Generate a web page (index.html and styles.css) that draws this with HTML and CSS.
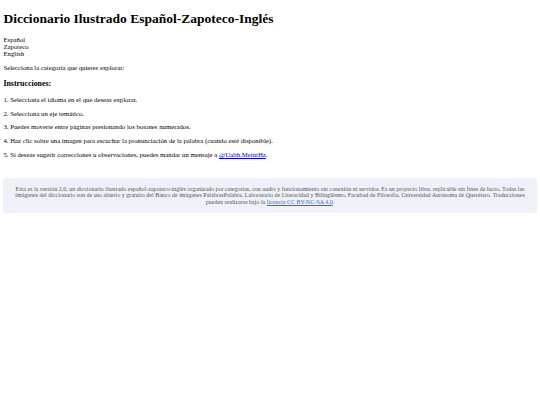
FILE: index.html
```html
<!DOCTYPE html>
<html lang="es">
<head>
<meta charset="utf-8">
<title>Diccionario Ilustrado Español-Zapoteco-Inglés</title>
<link rel="stylesheet" href="styles.css">
</head>
<body>
<h1 class="title">Diccionario Ilustrado Español-Zapoteco-Inglés</h1>
<div class="langs">
  <div>Español</div>
  <div>Zapoteco</div>
  <div>English</div>
</div>
<p class="para">Selecciona la categoría que quieres explorar:</p>
<h3 class="subtitle">Instrucciones:</h3>
<p class="para">1. Selecciona el idioma en el que deseas explorar.</p>
<p class="para">2. Selecciona un eje temático.</p>
<p class="para">3. Puedes moverte entre páginas presionando los botones numerados.</p>
<p class="para">4. Haz clic sobre una imagen para escuchar la pronunciación de la palabra (cuando esté disponible).</p>
<p class="para">5. Si deseas sugerir correcciones u observaciones, puedes mandar un mensaje a <a class="link" href="#">@Ualth.MeintHz</a>.</p>
<footer class="note">
  Esta es la versión 2.0, un diccionario ilustrado español-zapoteco-inglés organizado por categorías, con audio y funcionamiento sin conexión ni servidor. Es un proyecto libre, replicable sin fines de lucro. Todas las imágenes del diccionario son de uso abierto y gratuito del Banco de imágenes PalabrasPalabra. Laboratorio de Literacidad y Bilingüismo. Facultad de Filosofía. Universidad Autónoma de Querétaro. Traducciones pueden realizarse bajo la <a class="note-link" href="#">licencia CC BY-NC-SA 4.0</a>.
</footer>
</body>
</html>
```
FILE: styles.css
```css
html {
  background: #ffffff;
}
body {
  margin: 3.4px;
  font-family: "Liberation Serif", "Times New Roman", serif;
  font-size: 6.75px;
  color: #000;
}
.title {
  font-size: 13.5px;
  font-weight: bold;
  margin: 8px 0 9px;
}
.para {
  margin: 6.75px 0;
}
.subtitle {
  font-size: 7.9px;
  font-weight: bold;
  margin: 7.9px 0;
}
.link {
  color: #0000ee;
}
.note {
  margin-top: 20px;
  background: #eef2f8;
  border-radius: 3px;
  padding: 7.6px 6px;
  text-align: center;
  font-size: 6px;
  line-height: 6.6px;
  color: #555;
}
.note-link {
  color: #2b6cd8;
}
```
